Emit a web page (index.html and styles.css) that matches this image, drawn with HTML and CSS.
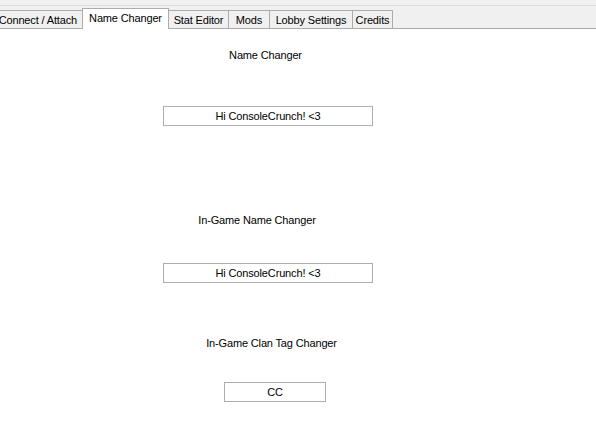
FILE: index.html
```html
<!DOCTYPE html>
<html lang="en">
<head>
    <meta charset="UTF-8">
    <title>Name Changer</title>
    <link rel="stylesheet" href="styles.css">
</head>
<body>
    <div class="strip">
        <div class="strip-top"></div>
        <nav class="tabs">
            <div class="tab tab-connect">Connect / Attach</div>
            <div class="tab tab-name active">Name Changer</div>
            <div class="tab tab-stat">Stat Editor</div>
            <div class="tab tab-mods">Mods</div>
            <div class="tab tab-lobby">Lobby Settings</div>
            <div class="tab tab-credits">Credits</div>
        </nav>
    </div>

    <main class="panel">
        <div class="label label-name">Name Changer</div>
        <input class="field field-name" type="text" value="Hi ConsoleCrunch! <3">

        <div class="label label-ingame">In-Game Name Changer</div>
        <input class="field field-ingame" type="text" value="Hi ConsoleCrunch! <3">

        <div class="label label-clan">In-Game Clan Tag Changer</div>
        <input class="field field-clan" type="text" value="CC">
    </main>
</body>
</html>
```

FILE: styles.css
```css
body {
    margin: 0;
    background: #fff;
    font-family: "Liberation Sans", Arial, sans-serif;
    font-size: 11px;
    letter-spacing: -0.15px;
    color: #000;
    overflow: hidden;
}

/* tab strip */
.strip {
    background: #f0f0f0;
    border-bottom: 1px solid #acacac;
}

.strip-top {
    height: 5px;
    border-bottom: 1px solid #dcdcdc;
}

.tabs {
    display: flex;
    align-items: flex-end;
    height: 22px;
    margin-left: -6px;
}

.tab {
    box-sizing: border-box;
    height: 18px;
    padding-top: 3px;
    line-height: 13px;
    text-align: center;
    white-space: nowrap;
    background: #f0f0f0;
    border: 1px solid #acacac;
    border-bottom: none;
    margin-left: -1px;
}

.tab:first-child {
    margin-left: 0;
}

.tab.active {
    position: relative;
    z-index: 1;
    height: 21px;
    margin-bottom: -1px;
    background: #fff;
}

.tab-connect { width: 89px; text-align: right; padding-right: 5px; }
.tab-name { width: 87px; }
.tab-stat { width: 61px; }
.tab-mods { width: 42px; }
.tab-lobby { width: 84px; }
.tab-credits { width: 41px; }

/* panel contents */
.panel {
    display: flex;
    flex-direction: column;
    align-items: flex-start;
}

.label {
    line-height: 13px;
    text-align: center;
    white-space: nowrap;
}

.label-name { margin: 20px 0 0 215px; width: 101px; }
.label-ingame { margin: 88px 0 0 187px; width: 140px; }
.label-clan { margin: 54px 0 0 201px; width: 141px; }

.field {
    box-sizing: border-box;
    height: 20px;
    padding: 0 2px;
    border: 1px solid #adadad;
    background: #fff;
    font-family: "Liberation Sans", Arial, sans-serif;
    font-size: 11px;
    letter-spacing: -0.15px;
    color: #000;
    text-align: center;
    outline: none;
}

.field-name { margin: 44px 0 0 163px; width: 210px; }
.field-ingame { margin: 36px 0 0 163px; width: 210px; }
.field-clan { margin: 32px 0 0 224px; width: 102px; }
```
